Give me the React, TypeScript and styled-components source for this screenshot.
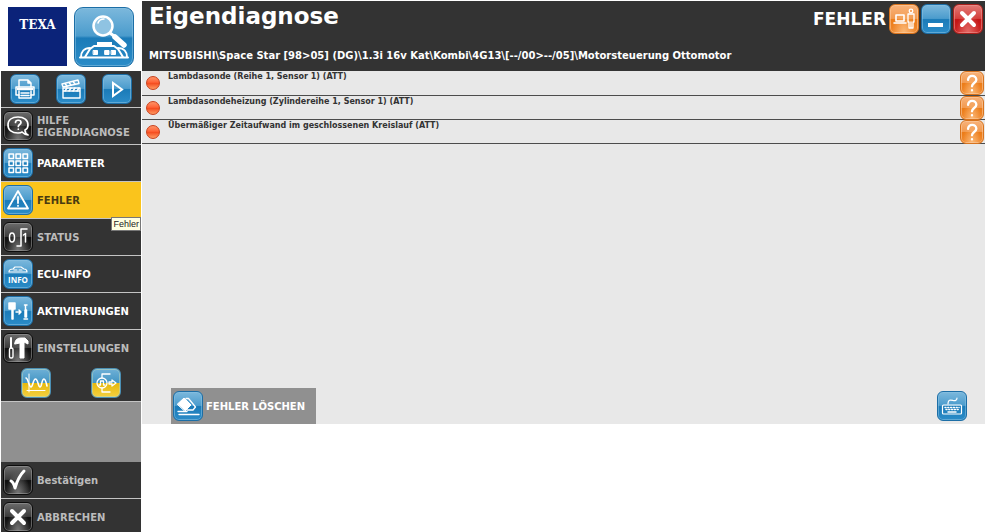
import React from "react";
import styled, { createGlobalStyle, css } from "styled-components";

const GlobalStyle = createGlobalStyle`
  * { box-sizing: border-box; }
  body {
    margin: 0;
    background: #fff;
    font-family: "DejaVu Sans", Verdana, sans-serif;
    font-weight: 700;
  }
  button { font: inherit; border: 0; padding: 0; cursor: pointer; }
  h1, h2, p, ul { margin: 0; padding: 0; }
`;

type Tone = "blue" | "black" | "orange" | "red" | "duo";

const tones: Record<Tone, [string, string, string]> = {
  blue: ["#1c6ea6", "linear-gradient(#7cb8dc 0%, #4b9ccd 48%, #1b7bb8 52%, #2b8cc8 100%)", "#8cc3e2"],
  black: ["#0c0c0c", "radial-gradient(ellipse at 50% 100%, #777 0%, rgba(60,60,60,0) 60%), linear-gradient(#6c6c6c 0%, #3c3c3c 48%, #0e0e0e 52%, #2a2a2a 100%)", "#a0a0a0"],
  orange: ["#d8731d", "radial-gradient(ellipse at 50% 100%, #fbb877 0%, rgba(240,130,40,0) 60%), linear-gradient(#f8b27a 0%, #f29a50 48%, #ec7c18 52%, #f08a30 100%)", "#fbd0a8"],
  red: ["#a8201c", "radial-gradient(ellipse at 50% 100%, #e46a66 0%, rgba(210,40,40,0) 60%), linear-gradient(#e27a76 0%, #d4403c 48%, #c41414 52%, #cc2a28 100%)", "#ee9c98"],
  duo: ["#4b8fb4", "linear-gradient(#6fb0d6 0%, #4295c4 50%, #e6b80c 50%, #f4d040 100%)", "#b9d6bc"],
};

const tile = css<{ $tone: Tone; $size?: number }>`
  display: block;
  flex: none;
  width: ${(p) => p.$size ?? 30}px;
  height: ${(p) => p.$size ?? 30}px;
  border: 1px solid ${(p) => tones[p.$tone][0]};
  border-radius: ${(p) => ((p.$size ?? 30) > 40 ? 9 : 6)}px;
  background: ${(p) => tones[p.$tone][1]};
  box-shadow: inset 0 0 0 1px ${(p) => tones[p.$tone][2]}88;
  overflow: hidden;
  svg { display: block; width: 100%; height: 100%; }
`;
const Tile = styled.span<{ $tone: Tone; $size?: number }>`${tile}`;
const TileButton = styled.button<{ $tone: Tone; $size?: number }>`${tile}`;

const Shell = styled.div`
  display: grid;
  grid-template-columns: 140px minmax(0, 1fr);
  column-gap: 1px;
  height: 100vh;
  padding: 1px 2px 0 1px;
  overflow: hidden;
`;

const Sidebar = styled.aside`
  display: flex;
  flex-direction: column;
  min-height: 0;
`;

const Brand = styled.div`
  display: flex;
  flex: none;
  gap: 7px;
  height: 70px;
  padding: 6px 0 0 7px;
`;

const Logo = styled.div`
  width: 59px;
  height: 59px;
  padding-top: 11px;
  background: #0b2379;
  color: #fff;
  font: 700 12px/14px "DejaVu Serif", serif;
  text-align: center;
`;

const IconRow = styled.div<{ $wide?: boolean }>`
  display: flex;
  flex: none;
  justify-content: ${(p) => (p.$wide ? "space-between" : "space-around")};
  align-items: center;
  height: 37px;
  padding: ${(p) => (p.$wide ? "0 20px" : "0 1px")};
  background: #333;
  border-bottom: 1px solid #c4c4c4;
`;

const Nav = styled.nav`
  display: flex;
  flex: none;
  flex-direction: column;
`;

const NavButton = styled.button<{ $active?: boolean; $dim?: boolean; $last?: boolean }>`
  position: relative;
  display: flex;
  flex: none;
  align-items: center;
  gap: 4px;
  height: ${(p) => (p.$last ? 35 : 37)}px;
  padding: 0 0 0 2px;
  border-bottom: ${(p) => (p.$last ? "0" : "1px solid #c4c4c4")};
  background: ${(p) => (p.$active ? "#fac41c" : "#333")};
  color: ${(p) => (p.$active ? "#4a3b10" : p.$dim ? "#bcbcbc" : "#fff")};
  font-size: 10px;
  line-height: 12px;
  text-align: left;
`;

const NavLabel = styled.span`
  padding-top: 2px;
`;

const Tooltip = styled.span`
  position: absolute;
  right: 0;
  bottom: -13px;
  z-index: 1;
  padding: 0 1px;
  border: 1px solid #777;
  background: #ffffe1;
  color: #222;
  font: 400 9px/12px "Liberation Sans", Arial, sans-serif;
`;

const Filler = styled.div`
  flex: 1 0 60px;
  background: #909090;
`;

const Main = styled.main`
  display: flex;
  flex-direction: column;
  margin-bottom: 108px;
  background: #e8e8e8;
`;

const Header = styled.header`
  display: flex;
  flex: none;
  flex-direction: column;
  justify-content: space-between;
  height: 70px;
  padding: 2px 2px 9px 7px;
  background: #333;
  color: #fff;
`;

const TitleBar = styled.div`
  display: flex;
  align-items: flex-start;
  justify-content: space-between;
`;

const Title = styled.h1`
  font-size: 23px;
  line-height: 27px;
`;

const WindowTools = styled.div`
  display: flex;
  align-items: center;
  gap: 2px;
  padding-top: 1px;
`;

const Mode = styled.h2`
  margin-right: 1px;
  font-size: 17px;
  line-height: 30px;
`;

const VehiclePath = styled.p`
  font-size: 10px;
  line-height: 12px;
`;

const Faults = styled.ul`
  flex: none;
  list-style: none;
`;

const Fault = styled.li`
  display: flex;
  align-items: center;
  gap: 8px;
  height: 24px;
  padding: 0 1px 0 4px;
  border-bottom: 1px solid #4c4c4c;
  color: #333;
  font-size: 8px;
  line-height: 12px;
  &:first-child { height: 25px; }
`;

const Dot = styled.span`
  flex: none;
  width: 14px;
  height: 14px;
  border: 1px solid #c8401c;
  border-radius: 50%;
  background: linear-gradient(#ff9468 0%, #ff6236 45%, #f4481c 50%, #ff9a62 100%);
`;

const FaultText = styled.span`
  flex: 1;
  align-self: flex-start;
`;

const Footer = styled.footer`
  display: flex;
  align-items: center;
  justify-content: space-between;
  margin-top: auto;
  padding: 0 18px 0 29px;
`;

const ClearButton = styled.button`
  display: flex;
  align-items: center;
  gap: 3px;
  width: 145px;
  height: 36px;
  padding-left: 2px;
  background: #909090;
  color: #fff;
  font-size: 10px;
`;

function Svg({ box = 28, w = 2, children }: { box?: number; w?: number; children: React.ReactNode }) {
  return (
    <svg viewBox={`0 0 ${box} ${box}`} fill="none" stroke="#fff" strokeWidth={w} strokeLinecap="round" strokeLinejoin="round" aria-hidden="true">
      {children}
    </svg>
  );
}

const SearchCar = () => (
  <Svg box={58} w={2}>
    <circle cx="28" cy="18" r="9.500" fill="#8fc3e2" strokeWidth="2.500" />
    <path d="M35 25l4 3" strokeWidth="3" />
    <path d="M40 29l9 8" strokeWidth="5.500" />
    <path d="M23 15c1-3 3-4 6-4" strokeWidth="1.500" />
    <path d="M22 35.500h15" strokeWidth="3" strokeLinecap="butt" />
    <path d="M6 49c0-5 3-9 9-9M52 49c0-5-3-9-9-9M10 49l5-8 4-3h20l4 3 5 8M5 49.500h48" />
    <path d="M18.500 42.500h4v4h-4zM30 42.500h4v4h-4zM36.500 42.500h4v4h-4z" fill="#fff" strokeWidth="1" />
  </Svg>
);

const Printer = () => (
  <Svg w={1.5}>
    <path d="M8 12V5h9l3 3v4M17 5v3h3" />
    <path d="M8 20H5v-8h18v8h-3" />
    <path d="M7 14h14" strokeWidth="2.5" />
    <path d="M8 16v7h12v-7M10 18h8M10 20.5h8" />
  </Svg>
);

const Clapper = () => (
  <Svg w={1.4}>
    <path d="M6 13h17v10H6zM6 16h17" />
    <path d="M5 9l16-4 1 3.5L6 12z" />
    <path d="M8 8.5l2 2.5M12 7.5l2 2.5M16 6.5l2 2.5M10 13l-2 3M14 13l-2 3M18 13l-2 3M22 13l-2 3" strokeWidth="1.500" />
  </Svg>
);

const Play = () => <Svg w={2}><path d="M10 8v13l9-6.500z" strokeLinejoin="miter" /></Svg>;

const HelpBubble = () => (
  <Svg w={1.7}>
    <path d="M18 20c2 2 4 3 6 3-2-1-3-3-3-5 2-1 3-3 3-5 0-5-4-8-10-8S4 8 4 13s4 8 10 8c2 0 3 0 4-1z" />
    <path d="M11.500 10.500c0-3 5.500-3 5.500 0 0 2-2.700 2-2.700 4M14.300 17v.2" />
  </Svg>
);

const GridIcon = () => (
  <Svg w={1.5}>
    {[5, 12, 19].map((y) => [5, 12, 19].map((x) => <rect key={`${x}-${y}`} x={x} y={y} width="4.500" height="4.500" />))}
  </Svg>
);

const Warning = () => (
  <Svg w={1.8}>
    <path d="M14 5L4 22.500h20z" />
    <path d="M14 11v6M14 19.700v.2" />
  </Svg>
);

const Status = () => (
  <Svg w={1.5}>
    <ellipse cx="8" cy="14.500" rx="2.500" ry="4.500" />
    <path d="M19.500 12l2-1.500V19M13 23h4V6h6" />
  </Svg>
);

const Info = () => (
  <Svg w={1.2}>
    <path d="M5 12c0-2 2-3 4-3l2-2h6l3 2c2 0 3 1 3 3zM10 10h3M15 10h3" />
    <text x="14" y="23" textAnchor="middle" fill="#fff" stroke="none" fontFamily="Open Sans, sans-serif" fontWeight="700" fontSize="8">INFO</text>
  </Svg>
);

const Activate = () => (
  <Svg w={1.5}>
    <path d="M5 6h6v6H5zM8 12h1v10H8z" fill="#fff" />
    <path d="M12 15h5M15 13l2 2-2 2" />
    <path d="M20.500 8h2.500M21.500 8v4M21 13h1.500v7H21zM20 22h3.500" fill="#fff" />
  </Svg>
);

const Tools = () => (
  <Svg w={1.4}>
    <path d="M7 4v10" strokeWidth="2" />
    <rect x="5.500" y="14" width="3.500" height="10" rx="1.500" />
    <path d="M11 8c1-3 3-4 6-4h4l3 3v3l-4-2v16h-4V9l-5 1z" fill="#fff" strokeWidth="1" />
  </Svg>
);

const Wave = () => (
  <Svg w={1.4}>
    <path d="M7 5v18M5 21.500h18" strokeWidth="1" />
    <path d="M4 9c2 0 3 9 5 9s2-8 4.500-8 2.500 8 4.500 8 1.500-8 4-8c1.500 0 2 3 3 7" strokeWidth="1.600" />
  </Svg>
);

const Simulate = () => (
  <Svg w={1.3}>
    <circle cx="10" cy="14" r="5" />
    <path d="M7 16h1.500v-4h3v4H13M10 9V5h8M10 19v4h8" />
    <path d="M17 13h3v-2l4 3-4 3v-2h-3z" />
  </Svg>
);

const Check = () => <Svg w={3}><path d="M7 15c2 1 3 3 4 7 2-7 4-12 9-17" /></Svg>;
const Cross = () => <Svg w={4}><path d="M8 8l12 12M20 8L8 20" /></Svg>;
const Minimize = () => <Svg w={4}><path d="M6 20h15" strokeLinecap="butt" /></Svg>;

const LaptopUser = () => (
  <Svg w={1.3}>
    <path d="M6 10h8v6H6zM4 18h12" strokeWidth="1.600" />
    <circle cx="21" cy="6" r="1.800" />
    <path d="M18 9h6v8h-1v6h-4v-6h-1zM21 17v6" />
  </Svg>
);

const Question = () => <Svg w={3}><path d="M9 10c0-7 10.500-6.500 10.500 0 0 4-5.500 4-5.500 8M14 23v.2" /></Svg>;

const Eraser = () => (
  <Svg w={1.3}>
    <path d="M3.500 12L10 6l7 7-6 6z" fill="#fff" strokeWidth="1" />
    <path d="M12 6.500h2.500l7 8.500-2.500 3h-6" />
    <path d="M4 19.500h9M5 22.500h20" />
  </Svg>
);

const Keyboard = () => (
  <Svg w={1.2}>
    <path d="M10 12c0-5 3-4 5-3.500s4 0 4-2.500" />
    <rect x="4.500" y="13" width="19" height="9" rx="1" />
    <path d="M7 15.500h14M8 17.500h13" strokeDasharray="1 1.800" strokeWidth="1.500" />
    <path d="M10 20h8" strokeWidth="1.500" />
  </Svg>
);

type Entry = { label: React.ReactNode; icon: React.ReactNode; tone: Tone; dim?: boolean; active?: boolean };

const entries: Entry[] = [
  { label: <>HILFE<br />EIGENDIAGNOSE</>, icon: <HelpBubble />, tone: "black", dim: true },
  { label: "PARAMETER", icon: <GridIcon />, tone: "blue" },
  { label: "FEHLER", icon: <Warning />, tone: "blue", active: true },
  { label: "STATUS", icon: <Status />, tone: "black", dim: true },
  { label: "ECU-INFO", icon: <Info />, tone: "blue" },
  { label: "AKTIVIERUNGEN", icon: <Activate />, tone: "blue" },
  { label: "EINSTELLUNGEN", icon: <Tools />, tone: "black", dim: true },
];

const faults = [
  "Lambdasonde (Reihe 1, Sensor 1) (ATT)",
  "Lambdasondeheizung (Zylindereihe 1, Sensor 1) (ATT)",
  "Übermäßiger Zeitaufwand im geschlossenen Kreislauf (ATT)",
];

export default function App() {
  return (
    <>
      <GlobalStyle />
      <Shell>
        <Sidebar>
          <Brand>
            <Logo>TEXA</Logo>
            <TileButton $tone="blue" $size={60} aria-label="Fahrzeugsuche"><SearchCar /></TileButton>
          </Brand>
          <IconRow>
            <TileButton $tone="blue" aria-label="Drucken"><Printer /></TileButton>
            <TileButton $tone="blue" aria-label="Aufnahme"><Clapper /></TileButton>
            <TileButton $tone="blue" aria-label="Wiedergabe"><Play /></TileButton>
          </IconRow>
          <Nav aria-label="Eigendiagnose">
            {entries.map((e, i) => (
              <NavButton key={i} $active={e.active} $dim={e.dim} $last={i === entries.length - 1} aria-current={e.active ? "page" : undefined}>
                <Tile $tone={e.tone}>{e.icon}</Tile>
                <NavLabel>{e.label}</NavLabel>
                {e.active && <Tooltip role="tooltip">Fehler</Tooltip>}
              </NavButton>
            ))}
          </Nav>
          <IconRow $wide>
            <TileButton $tone="duo" aria-label="Oszilloskop"><Wave /></TileButton>
            <TileButton $tone="duo" aria-label="Simulation"><Simulate /></TileButton>
          </IconRow>
          <Filler />
          <NavButton $dim><Tile $tone="black"><Check /></Tile><NavLabel>Bestätigen</NavLabel></NavButton>
          <NavButton $dim><Tile $tone="black"><Cross /></Tile><NavLabel>ABBRECHEN</NavLabel></NavButton>
        </Sidebar>
        <Main>
          <Header>
            <TitleBar>
              <Title>Eigendiagnose</Title>
              <WindowTools>
                <Mode>FEHLER</Mode>
                <TileButton $tone="orange" aria-label="Kundendienst"><LaptopUser /></TileButton>
                <TileButton $tone="blue" aria-label="Minimieren"><Minimize /></TileButton>
                <TileButton $tone="red" aria-label="Schließen"><Cross /></TileButton>
              </WindowTools>
            </TitleBar>
            <VehiclePath>{"MITSUBISHI\\Space Star [98>05] (DG)\\1.3i 16v Kat\\Kombi\\4G13\\[--/00>--/05]\\Motorsteuerung Ottomotor"}</VehiclePath>
          </Header>
          <Faults>
            {faults.map((text) => (
              <Fault key={text}>
                <Dot />
                <FaultText>{text}</FaultText>
                <TileButton $tone="orange" $size={24} aria-label={`Hilfe: ${text}`}><Question /></TileButton>
              </Fault>
            ))}
          </Faults>
          <Footer>
            <ClearButton><Tile $tone="blue"><Eraser /></Tile>FEHLER LÖSCHEN</ClearButton>
            <TileButton $tone="blue" aria-label="Tastatur"><Keyboard /></TileButton>
          </Footer>
        </Main>
      </Shell>
    </>
  );
}
